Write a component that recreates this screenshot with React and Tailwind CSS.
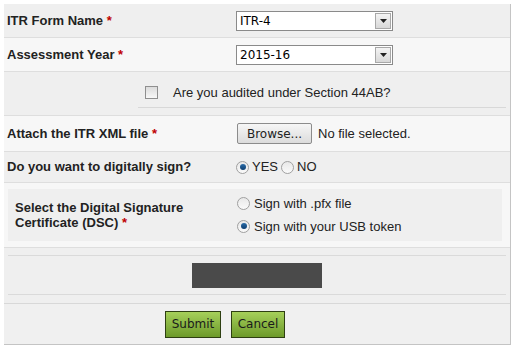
import React from "react";

const Star = () => <span className="text-[#c00000] font-bold"> *</span>;

const Radio = ({ checked }) => (
  <span className="inline-block w-[13px] h-[13px] rounded-full border border-[#a0a0a0] bg-gradient-to-b from-[#e8e8e8] to-[#fafafa] relative align-middle">
    {checked && (
      <span className="absolute left-[2.5px] top-[2.5px] w-[6px] h-[6px] rounded-full bg-gradient-to-b from-[#2a6ca8] to-[#0d3e70]" />
    )}
  </span>
);

const Select = ({ value }) => (
  <div className="w-[157px] h-[20px] border border-[#8a8a8a] bg-white flex items-center justify-between">
    <span className="pl-[3px] text-[12px] text-black" style={{ fontFamily: "'DejaVu Sans', Verdana, sans-serif" }}>{value}</span>
    <span className="w-[16px] h-[16px] mr-[1px] border border-[#a8a8a8] bg-gradient-to-b from-[#f4f4f4] to-[#d8d8d8] flex items-center justify-center">
      <svg width="7" height="4" viewBox="0 0 7 4"><path d="M0 0h7L3.5 4z" fill="#222" /></svg>
    </span>
  </div>
);

const Btn = ({ children, w }) => (
  <button className={`h-[27px] ${w} border border-[#2e3f12] bg-gradient-to-b from-[#a6d05a] to-[#6d9a2a] text-[12px] text-[#1a1a1a]`} style={{ fontFamily: "'DejaVu Sans', Tahoma, sans-serif" }}>
    {children}
  </button>
);

export default function App() {
  return (
    <div className="w-[516px] h-[354px] bg-white pt-[4px] pl-[4px]" style={{ fontFamily: "'Liberation Sans', Arial, sans-serif" }}>
      <div className="w-[507px] border-r border-b border-[#c4c4c4] text-[13px] text-[#222]">
        {/* Row 1 */}
        <div className="h-[34px] bg-[#efefef] border-b border-[#dedede] flex items-center">
          <div className="w-[232px] pl-[3px] font-bold">ITR Form Name<Star /></div>
          <Select value="ITR-4" />
        </div>
        {/* Row 2 */}
        <div className="h-[34px] bg-[#f7f7f7] border-b border-[#dedede] flex items-center">
          <div className="w-[232px] pl-[3px] font-bold">Assessment Year<Star /></div>
          <Select value="2015-16" />
        </div>
        {/* Row 3 */}
        <div className="h-[44px] bg-[#efefef] border-b border-[#dedede] pt-[6px] pl-[134px] pr-[4px]">
          <div className="h-[30px] border-b border-[#d8d8d8] flex items-center">
            <span className="inline-block w-[13px] h-[13px] ml-[7px] border border-[#8f8f8f] bg-gradient-to-b from-[#dcdcdc] to-[#f8f8f8]" />
            <span className="ml-[15px] text-[13px]">Are you audited under Section 44AB?</span>
          </div>
        </div>
        {/* Row 4 */}
        <div className="h-[36px] bg-[#f7f7f7] border-b border-[#dedede] flex items-center">
          <div className="w-[233px] pl-[3px] font-bold">Attach the ITR XML file<Star /></div>
          <button className="h-[21px] w-[75px] border border-[#8c8c8c] rounded-[2px] bg-gradient-to-b from-[#f6f6f6] to-[#dcdcdc] text-[12px] text-[#222]" style={{ fontFamily: "'DejaVu Sans', Verdana, sans-serif" }}>Browse...</button>
          <span className="ml-[6px] text-[13px]">No file selected.</span>
        </div>
        {/* Row 5 */}
        <div className="h-[31px] bg-[#efefef] border-b border-[#dedede] flex items-center">
          <div className="w-[232px] pl-[3px] font-bold">Do you want to digitally sign?</div>
          <Radio checked />
          <span className="ml-[3px]">YES</span>
          <span className="ml-[3px]"><Radio /></span>
          <span className="ml-[3px]">NO</span>
        </div>
        {/* Row 6 */}
        <div className="h-[65px] bg-[#f7f7f7] border-b border-[#dedede] pt-[6px] pl-[4px] pr-[8px]">
          <div className="h-[52px] bg-[#efefef] flex items-center">
            <div className="w-[229px] pl-[7px] font-bold leading-[15px]">
              Select the Digital Signature<br />Certificate (DSC)<Star />
            </div>
            <div className="flex flex-col gap-[3px]">
              <div className="flex items-center"><Radio /><span className="ml-[4px]">Sign with .pfx file</span></div>
              <div className="flex items-center"><Radio checked /><span className="ml-[4px]">Sign with your USB token</span></div>
            </div>
          </div>
        </div>
        {/* Row 7 */}
        <div className="h-[56px] bg-[#efefef] border-b border-[#d8d8d8] pt-[7px] pl-[4px] pr-[4px]">
          <div className="h-[40px] border-t border-b border-[#dadada] flex justify-center items-center">
            <div className="w-[130px] h-[25px] bg-[#4a4a4a]" />
          </div>
        </div>
        {/* Row 8 */}
        <div className="h-[40px] bg-[#f0f0f0] flex items-center pl-[161px] gap-[10px]">
          <Btn w="w-[56px]">Submit</Btn>
          <Btn w="w-[54px]">Cancel</Btn>
        </div>
      </div>
    </div>
  );
}
